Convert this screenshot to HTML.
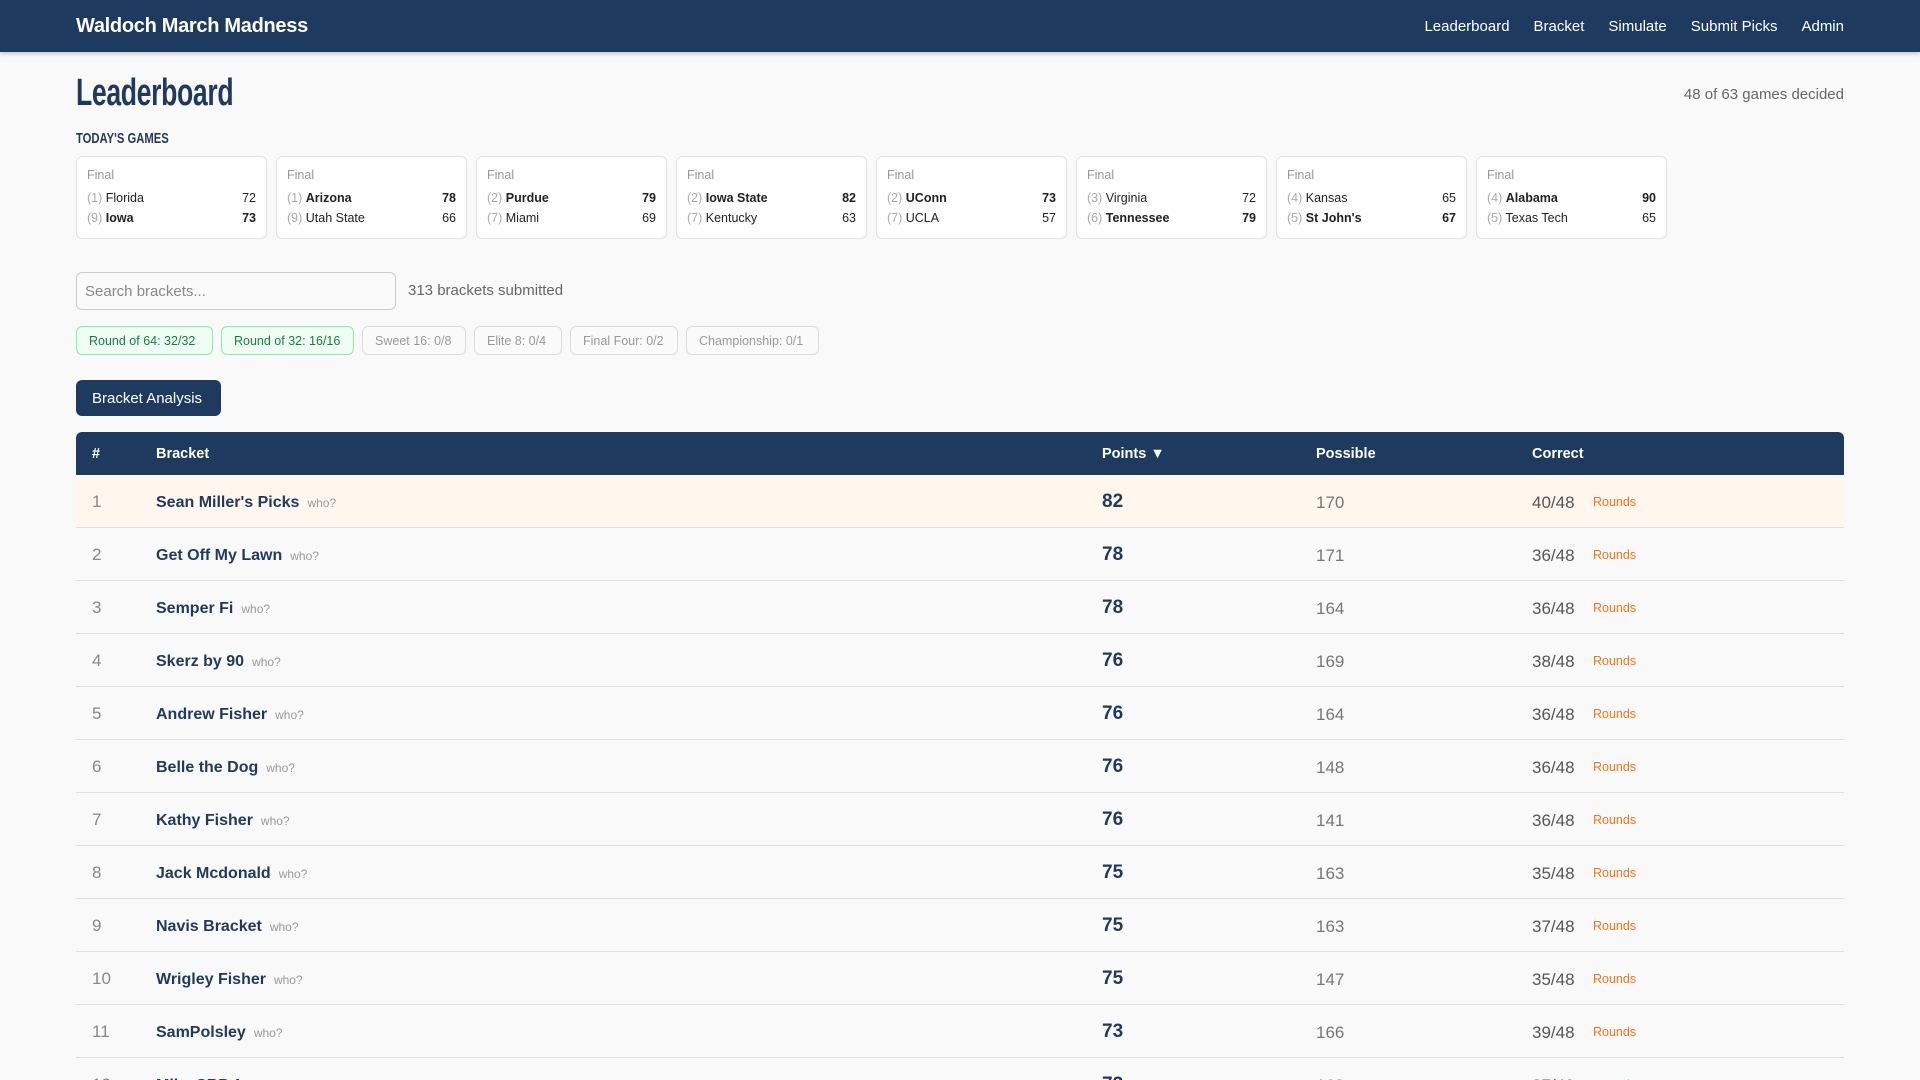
<!DOCTYPE html>
<html><head><meta charset="utf-8"><style>
*{box-sizing:border-box;margin:0;padding:0}
html,body{width:1920px;height:1080px;overflow:hidden}
body{background:#f9f9f9;font-family:"Liberation Sans",sans-serif;color:#1e3a5f}
#pg{position:relative;width:1920px;height:1080px;overflow:hidden}
.nav{height:52px;background:#1f3a5f;box-shadow:0 2px 4px rgba(0,0,0,.2);position:relative}
.brand{position:absolute;left:76px;top:15px;color:#fff;font-weight:bold;font-size:20px;letter-spacing:-.3px}
.links{position:absolute;right:76px;top:18px;color:#fff;font-size:15px}
.links span{margin-left:24px}
h1{position:absolute;left:76px;top:72px;font-weight:bold;font-size:38px;color:#1f3a5f;transform:scaleX(.7);transform-origin:0 0;letter-spacing:-.5px}
.decided{position:absolute;right:76px;top:86px;font-size:15px;color:#666}
.tg{position:absolute;left:76px;top:130px;font-weight:bold;font-size:15px;color:#1f3a5f;transform:scaleX(.75);transform-origin:0 0}
.card{position:absolute;top:156px;width:191px;height:83px;background:#fff;border:1px solid #e2e2e2;border-radius:6px;font-size:12.5px;color:#222}
.card .f{position:absolute;left:10px;top:11px;color:#999}
.card .r{position:absolute;left:10px;right:10px;display:flex;justify-content:space-between}
.card .s{color:#aaa}
.search{position:absolute;left:76px;top:272px;width:320px;height:38px;border:1px solid #ccc;border-radius:6px;background:#fafafa;font-size:15px;color:#888;padding:10px 8px}
.sub{position:absolute;left:408px;top:282px;font-size:15px;color:#666}
.chip{position:absolute;top:326px;height:29px;border-radius:6px;font-size:12.5px;padding:7px 12px;white-space:nowrap}
.g{background:#f0fdf4;border:1px solid #86efac;color:#15803d}
.n{background:#fafafa;border:1px solid #ddd;color:#999}
.btn{position:absolute;left:76px;top:380px;width:145px;height:36px;background:#1f3a5f;border-radius:6px;color:#fff;font-size:15px;padding:10px 16px}
.th{position:absolute;left:76px;top:432px;width:1768px;height:43px;background:#1f3a5f;border-radius:6px 6px 0 0;color:#fff;font-weight:bold;font-size:14.5px}
.th span,.row span{position:absolute}
.th span{top:14px}
.row{position:absolute;left:76px;width:1768px;height:53px;border-bottom:1px solid #e0e0e0}
.row .rk{left:16px;top:17px;font-size:17px;color:#888}
.row .nm{left:80px;top:19px;font-size:16px;font-weight:bold;color:#1f3a5f;white-space:nowrap}
.row .nm i{font-style:normal;font-weight:normal;font-size:12px;color:#999;margin-left:8px}
.row .pt{left:1026px;top:16px;font-size:19px;font-weight:bold;color:#1f3a5f}
.row .po{left:1240px;top:18px;font-size:17px;color:#777}
.row .co{left:1456px;top:18px;font-size:17px;color:#555}
.row .ro{left:1517px;top:20px;font-size:12.5px;color:#f97316}
</style></head><body><div id="pg">
<div class="nav"><div class="brand">Waldoch March Madness</div>
<div class="links"><span>Leaderboard</span><span>Bracket</span><span>Simulate</span><span>Submit Picks</span><span>Admin</span></div></div>
<h1>Leaderboard</h1>
<div class="decided">48 of 63 games decided</div>
<div class="tg">TODAY'S GAMES</div>

<div class="card" style="left:76px"><div class="f">Final</div><div class="r" style="top:34px"><span><span class="s">(1)</span> Florida</span><span>72</span></div><div class="r" style="top:54px"><span><span class="s">(9)</span> <b>Iowa</b></span><b>73</b></div></div>
<div class="card" style="left:276px"><div class="f">Final</div><div class="r" style="top:34px"><span><span class="s">(1)</span> <b>Arizona</b></span><b>78</b></div><div class="r" style="top:54px"><span><span class="s">(9)</span> Utah State</span><span>66</span></div></div>
<div class="card" style="left:476px"><div class="f">Final</div><div class="r" style="top:34px"><span><span class="s">(2)</span> <b>Purdue</b></span><b>79</b></div><div class="r" style="top:54px"><span><span class="s">(7)</span> Miami</span><span>69</span></div></div>
<div class="card" style="left:676px"><div class="f">Final</div><div class="r" style="top:34px"><span><span class="s">(2)</span> <b>Iowa State</b></span><b>82</b></div><div class="r" style="top:54px"><span><span class="s">(7)</span> Kentucky</span><span>63</span></div></div>
<div class="card" style="left:876px"><div class="f">Final</div><div class="r" style="top:34px"><span><span class="s">(2)</span> <b>UConn</b></span><b>73</b></div><div class="r" style="top:54px"><span><span class="s">(7)</span> UCLA</span><span>57</span></div></div>
<div class="card" style="left:1076px"><div class="f">Final</div><div class="r" style="top:34px"><span><span class="s">(3)</span> Virginia</span><span>72</span></div><div class="r" style="top:54px"><span><span class="s">(6)</span> <b>Tennessee</b></span><b>79</b></div></div>
<div class="card" style="left:1276px"><div class="f">Final</div><div class="r" style="top:34px"><span><span class="s">(4)</span> Kansas</span><span>65</span></div><div class="r" style="top:54px"><span><span class="s">(5)</span> <b>St John's</b></span><b>67</b></div></div>
<div class="card" style="left:1476px"><div class="f">Final</div><div class="r" style="top:34px"><span><span class="s">(4)</span> <b>Alabama</b></span><b>90</b></div><div class="r" style="top:54px"><span><span class="s">(5)</span> Texas Tech</span><span>65</span></div></div>

<div class="search">Search brackets...</div>
<div class="sub">313 brackets submitted</div>
<div class="chip g" style="left:76px;width:137px">Round of 64: 32/32</div>
<div class="chip g" style="left:221px;width:133px">Round of 32: 16/16</div>
<div class="chip n" style="left:362px;width:104px">Sweet 16: 0/8</div>
<div class="chip n" style="left:474px;width:88px">Elite 8: 0/4</div>
<div class="chip n" style="left:570px;width:108px">Final Four: 0/2</div>
<div class="chip n" style="left:686px;width:133px">Championship: 0/1</div>
<div class="btn">Bracket Analysis</div>

<div class="th"><span style="left:16px">#</span><span style="left:80px">Bracket</span><span style="left:1026px">Points ▼</span><span style="left:1240px">Possible</span><span style="left:1456px">Correct</span></div>

<div class="row" style="top:475px;background:#fff6ed"><span class="rk">1</span><span class="nm">Sean Miller's Picks<i>who?</i></span><span class="pt">82</span><span class="po">170</span><span class="co">40/48</span><span class="ro">Rounds</span></div>
<div class="row" style="top:528px"><span class="rk">2</span><span class="nm">Get Off My Lawn<i>who?</i></span><span class="pt">78</span><span class="po">171</span><span class="co">36/48</span><span class="ro">Rounds</span></div>
<div class="row" style="top:581px"><span class="rk">3</span><span class="nm">Semper Fi<i>who?</i></span><span class="pt">78</span><span class="po">164</span><span class="co">36/48</span><span class="ro">Rounds</span></div>
<div class="row" style="top:634px"><span class="rk">4</span><span class="nm">Skerz by 90<i>who?</i></span><span class="pt">76</span><span class="po">169</span><span class="co">38/48</span><span class="ro">Rounds</span></div>
<div class="row" style="top:687px"><span class="rk">5</span><span class="nm">Andrew Fisher<i>who?</i></span><span class="pt">76</span><span class="po">164</span><span class="co">36/48</span><span class="ro">Rounds</span></div>
<div class="row" style="top:740px"><span class="rk">6</span><span class="nm">Belle the Dog<i>who?</i></span><span class="pt">76</span><span class="po">148</span><span class="co">36/48</span><span class="ro">Rounds</span></div>
<div class="row" style="top:793px"><span class="rk">7</span><span class="nm">Kathy Fisher<i>who?</i></span><span class="pt">76</span><span class="po">141</span><span class="co">36/48</span><span class="ro">Rounds</span></div>
<div class="row" style="top:846px"><span class="rk">8</span><span class="nm">Jack Mcdonald<i>who?</i></span><span class="pt">75</span><span class="po">163</span><span class="co">35/48</span><span class="ro">Rounds</span></div>
<div class="row" style="top:899px"><span class="rk">9</span><span class="nm">Navis Bracket<i>who?</i></span><span class="pt">75</span><span class="po">163</span><span class="co">37/48</span><span class="ro">Rounds</span></div>
<div class="row" style="top:952px"><span class="rk">10</span><span class="nm">Wrigley Fisher<i>who?</i></span><span class="pt">75</span><span class="po">147</span><span class="co">35/48</span><span class="ro">Rounds</span></div>
<div class="row" style="top:1005px"><span class="rk">11</span><span class="nm">SamPolsley<i>who?</i></span><span class="pt">73</span><span class="po">166</span><span class="co">39/48</span><span class="ro">Rounds</span></div>
<div class="row" style="top:1058px"><span class="rk">12</span><span class="nm">Mike SBP 1<i>who?</i></span><span class="pt">73</span><span class="po">163</span><span class="co">37/48</span><span class="ro">Rounds</span></div>
</div></body></html>
